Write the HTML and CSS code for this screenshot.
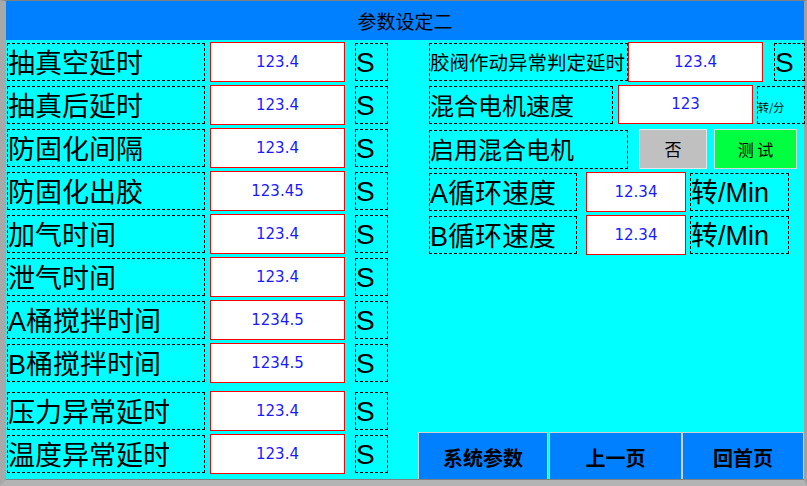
FILE: index.html
```html
<!DOCTYPE html>
<html lang="zh">
<head>
<meta charset="utf-8">
<title>参数设定二</title>
<link rel="stylesheet" href="styles.css">
</head>
<body>
<div class="frame">
  <div class="screen">
    <div class="header">参数设定二</div>
    <div class="main">
      <div class="left">
        <div class="row"><div class="lbl">抽真空延时</div><div class="val">123.4</div><div class="unit-s">S</div></div>
        <div class="row"><div class="lbl">抽真后延时</div><div class="val">123.4</div><div class="unit-s">S</div></div>
        <div class="row"><div class="lbl">防固化间隔</div><div class="val">123.4</div><div class="unit-s">S</div></div>
        <div class="row"><div class="lbl">防固化出胶</div><div class="val">123.45</div><div class="unit-s">S</div></div>
        <div class="row"><div class="lbl">加气时间</div><div class="val">123.4</div><div class="unit-s">S</div></div>
        <div class="row"><div class="lbl">泄气时间</div><div class="val">123.4</div><div class="unit-s">S</div></div>
        <div class="row"><div class="lbl">A桶搅拌时间</div><div class="val">1234.5</div><div class="unit-s">S</div></div>
        <div class="row"><div class="lbl">B桶搅拌时间</div><div class="val">1234.5</div><div class="unit-s">S</div></div>
        <div class="row row-sep"><div class="lbl">压力异常延时</div><div class="val">123.4</div><div class="unit-s">S</div></div>
        <div class="row"><div class="lbl">温度异常延时</div><div class="val">123.4</div><div class="unit-s">S</div></div>
      </div>
      <div class="right">
        <div class="rrow r1">
          <div class="lbl lbl-sm">胶阀作动异常判定延时</div>
          <div class="val">123.4</div>
          <div class="unit-s">S</div>
        </div>
        <div class="rrow r2">
          <div class="lbl lbl-md">混合电机速度</div>
          <div class="val">123</div>
          <div class="unit-tiny">转/分</div>
        </div>
        <div class="rrow r3">
          <div class="lbl lbl-md">启用混合电机</div>
          <div class="btn btn-no">否</div>
          <div class="btn btn-test">测 试</div>
        </div>
        <div class="rrow r4">
          <div class="lbl">A循环速度</div>
          <div class="val">12.34</div>
          <div class="unit-rpm">转/Min</div>
        </div>
        <div class="rrow r5">
          <div class="lbl">B循环速度</div>
          <div class="val">12.34</div>
          <div class="unit-rpm">转/Min</div>
        </div>
        <div class="navbar">
          <div class="nav nav1">系统参数</div>
          <div class="nav nav2">上一页</div>
          <div class="nav nav3">回首页</div>
        </div>
      </div>
    </div>
  </div>
</div>
</body>
</html>
```
FILE: styles.css
```css
html, body {
  margin: 0;
  padding: 0;
}
body {
  width: 807px;
  height: 486px;
  background: #b4b4b4;
  overflow: hidden;
  font-family: "Liberation Sans", "Noto Sans CJK SC", sans-serif;
}
.frame {
  width: 807px;
  height: 486px;
  box-sizing: border-box;
  border-top: 1px solid #808080;
  border-left: 6px solid #a8a8a8;
  border-right: 3px solid #a0a0a0;
  border-bottom: 6px solid #b4b4b4;
  background: #b4b4b4;
}
.screen {
  width: 798px;
  height: 478px;
  background: #00ffff;
  border-bottom: 1px solid #808080;
  display: flex;
  flex-direction: column;
}
.header {
  height: 39px;
  flex: none;
  background: #0080ff;
  color: #000;
  font-family: "Noto Sans CJK SC", sans-serif;
  font-size: 19px;
  line-height: 40px;
  text-align: center;
}
.main {
  flex: 1;
  display: flex;
  padding-top: 2px;
  min-height: 0;
}
.left {
  width: 382px;
  padding-left: 1px;
  box-sizing: border-box;
  display: flex;
  flex-direction: column;
  gap: 3px;
}
.row {
  display: flex;
  height: 40px;
  align-items: flex-start;
}
.row-sep {
  margin-top: 5px;
}
.lbl {
  box-sizing: border-box;
  height: 38px;
  margin-top: 1px;
  border: 1px dashed #000;
  font-size: 27px;
  line-height: 40px;
  color: #000;
  white-space: nowrap;
  overflow: hidden;
}
.row .lbl {
  width: 198px;
}
.val {
  box-sizing: border-box;
  height: 40px;
  width: 135px;
  background: #fff;
  border: 1px solid #ff0000;
  color: #1a1aff;
  font-family: "DejaVu Sans", sans-serif;
  font-size: 15px;
  line-height: 38px;
  text-align: center;
}
.row .val {
  margin-left: 5px;
}
.unit-s {
  box-sizing: border-box;
  height: 38px;
  margin-top: 1px;
  border: 1px dashed #000;
  font-size: 28px;
  line-height: 37px;
  color: #000;
}
.row .unit-s {
  width: 33px;
  margin-left: 10px;
}
.right {
  margin-left: 30px;
  flex: 1;
  display: flex;
  flex-direction: column;
}
.rrow {
  display: flex;
  align-items: flex-start;
  padding-left: 11px;
  height: 40px;
}
.r2 { margin-top: 3px; }
.r3 { margin-top: 4px; }
.r4 { margin-top: 3px; }
.r5 { margin-top: 3px; }
.lbl-sm {
  font-size: 19.5px;
  line-height: 39px;
}
.lbl-md {
  font-size: 24px;
  line-height: 39px;
}
.r1 .lbl { width: 199px; }
.r1 .val { margin-left: 0; }
.r1 .unit-s { width: 31px; margin-left: 11px; }
.r2 .lbl { width: 184px; }
.r2 .val { margin-left: 5px; height: 39px; line-height: 37px; }
.unit-tiny {
  box-sizing: border-box;
  height: 38px;
  width: 48px;
  margin-top: 1px;
  margin-left: 4px;
  border: 1px dashed #000;
  font-family: "Noto Sans CJK SC", sans-serif;
  font-size: 11px;
  line-height: 41px;
  color: #000;
}
.r3 .lbl { width: 199px; height: 39px; }
.btn {
  box-sizing: border-box;
  height: 40px;
  border: 1px solid #e6e6e6;
  font-family: "Noto Sans CJK SC", sans-serif;
  text-align: center;
  color: #000;
  line-height: 38px;
}
.btn-no {
  width: 68px;
  margin-left: 11px;
  background: #c0c0c0;
  font-size: 17px;
}
.btn-test {
  width: 83px;
  margin-left: 7px;
  background: #00ff40;
  font-size: 16px;
  border-color: #d8d8d8;
}
.r4 .lbl, .r5 .lbl { width: 148px; }
.r4 .val, .r5 .val { width: 100px; margin-left: 9px; }
.unit-rpm {
  box-sizing: border-box;
  height: 38px;
  width: 99px;
  margin-top: 1px;
  margin-left: 4px;
  border: 1px dashed #000;
  font-size: 27px;
  line-height: 38px;
  color: #000;
  white-space: nowrap;
}
.navbar {
  margin-top: auto;
  display: flex;
  height: 47px;
  gap: 1px;
}
.nav {
  box-sizing: border-box;
  height: 47px;
  background: #0080ff;
  border: 1px solid #d0d0d0;
  border-bottom: none;
  font-family: "Noto Sans CJK SC", sans-serif;
  font-weight: 700;
  font-size: 20px;
  line-height: 50px;
  text-align: center;
  color: #000;
}
.nav1 { width: 130px; }
.nav2 { width: 133px; }
.nav3 { width: 122px; margin-left: -1px; }
```
